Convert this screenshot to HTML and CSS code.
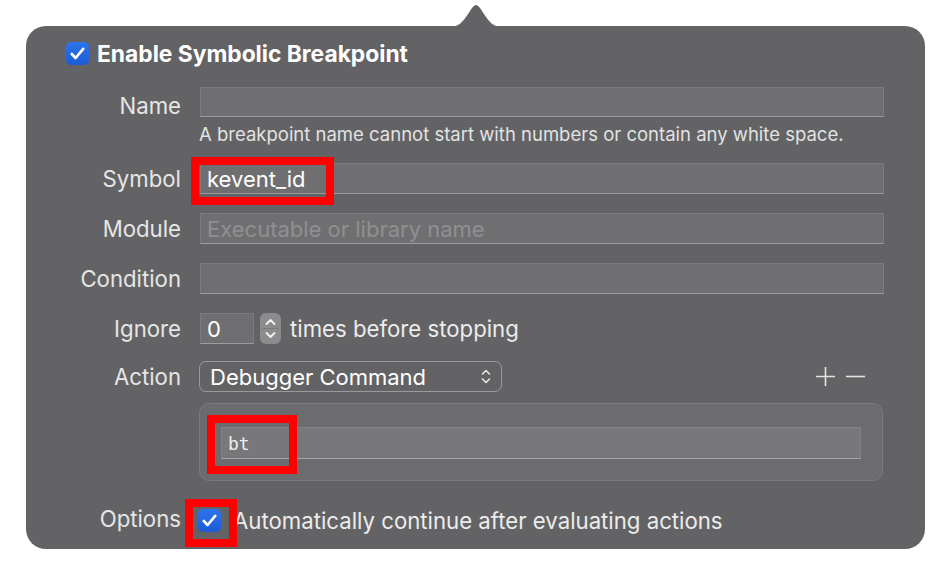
FILE: index.html
```html
<!DOCTYPE html>
<html>
<head>
<meta charset="utf-8">
<link rel="stylesheet" href="styles.css">
</head>
<body>
<div class="panel">
  <svg class="arrow" width="58" height="25" viewBox="0 0 58 25"><path d="M0 25 C 10 25 13 23 19 15 L 25 6 Q 29 0 33 6 L 39 15 C 45 23 48 25 58 25 Z" fill="#636365"/></svg>

  <div class="header">
    <span class="check"><svg width="15" height="13" viewBox="0 0 15 13"><path d="M1.8 7 L5.6 11 L13.2 1.8" fill="none" stroke="#fff" stroke-width="2.6" stroke-linecap="round" stroke-linejoin="round"/></svg></span>
    <span class="title">Enable Symbolic Breakpoint</span>
  </div>

  <div class="row r-name">
    <span class="label">Name</span>
    <div class="field grow"></div>
  </div>
  <div class="row r-hint">
    <span class="label"></span>
    <span class="hint">A breakpoint name cannot start with numbers or contain any white space.</span>
  </div>
  <div class="row r-symbol">
    <span class="label">Symbol</span>
    <div class="field grow"><span class="value">kevent_id</span></div>
  </div>
  <div class="row r-std">
    <span class="label">Module</span>
    <div class="field grow"><span class="placeholder">Executable or library name</span></div>
  </div>
  <div class="row r-std">
    <span class="label">Condition</span>
    <div class="field grow"></div>
  </div>
  <div class="row r-std">
    <span class="label">Ignore</span>
    <div class="field small"><span class="value">0</span></div>
    <span class="stepper"><svg width="21" height="31" viewBox="0 0 21 31"><rect x="0" y="0" width="21" height="31" rx="6" fill="#8c8c8e"/><path d="M6.5 11 L10.5 7 L14.5 11" fill="none" stroke="#f2f2f2" stroke-width="1.8" stroke-linecap="round" stroke-linejoin="round"/><path d="M6.5 20 L10.5 24 L14.5 20" fill="none" stroke="#f2f2f2" stroke-width="1.8" stroke-linecap="round" stroke-linejoin="round"/><line x1="2" y1="15.5" x2="19" y2="15.5" stroke="#7a7a7c" stroke-width="1"/></svg></span>
    <span class="after">times before stopping</span>
  </div>
  <div class="row r-action">
    <span class="label">Action</span>
    <div class="popup"><span>Debugger Command</span><svg width="10" height="15" viewBox="0 0 10 15"><path d="M1.5 5 L5 1.5 L8.5 5 M1.5 10 L5 13.5 L8.5 10" fill="none" stroke="#e6e6e6" stroke-width="1.6" stroke-linecap="round" stroke-linejoin="round"/></svg></div>
    <div class="pm">
      <svg width="19" height="19" viewBox="0 0 19 19"><path d="M0 9.5 H19 M9.5 0 V19" stroke="#e4e4e4" stroke-width="1.6"/></svg>
      <svg width="19" height="19" viewBox="0 0 19 19"><path d="M0 9.5 H19" stroke="#e4e4e4" stroke-width="1.6"/></svg>
    </div>
  </div>
  <div class="row r-box">
    <span class="label"></span>
    <div class="actionbox">
      <div class="field code"><span>bt</span></div>
    </div>
  </div>
  <div class="row r-options">
    <span class="label opt">Options</span>
    <span class="check small-check"><svg width="15" height="13" viewBox="0 0 15 13"><path d="M1.8 7 L5.6 11 L13.2 1.8" fill="none" stroke="#fff" stroke-width="2.6" stroke-linecap="round" stroke-linejoin="round"/></svg></span>
    <span class="after opt-text">Automatically continue after evaluating actions</span>
  </div>

  <div class="mark m1"></div>
  <div class="mark m2"></div>
  <div class="mark m3"></div>
</div>
</body>
</html>
```

FILE: styles.css
```css
* { box-sizing: border-box; }
html, body { margin: 0; padding: 0; background: #ffffff; }
body {
  font-family: Inter, "Noto Sans", "Liberation Sans", sans-serif;
  color: #ececec;
  width: 952px;
  height: 576px;
  overflow: hidden;
}
.panel {
  position: relative;
  margin: 26px 0 0 26px;
  width: 899px;
  height: 523px;
  background: #636365;
  border-radius: 20px;
  padding: 16px 41px 0 0;
}
.arrow {
  position: absolute;
  left: 421px;
  top: -24px;
  display: block;
}
.header {
  display: flex;
  align-items: center;
  padding-left: 40px;
  height: 23px;
}
.check {
  width: 23px;
  height: 23px;
  border-radius: 5px;
  background: linear-gradient(#2f74ec, #1b5bd6);
  display: flex;
  align-items: center;
  justify-content: center;
  flex: none;
}
.title {
  margin-left: 8px;
  font-size: 22.8px;
  font-weight: 700;
  color: #ffffff;
}
.row {
  display: flex;
  align-items: center;
  height: 31px;
}
.label {
  width: 155px;
  margin-right: 19px;
  text-align: right;
  font-size: 22.2px;
  flex: none;
  color: #e6e6e6;
}
.r-name { margin-top: 22px; height: 30px; }
.r-name .label { position: relative; top: 3px; }
.r-hint { margin-top: 6px; height: 22px; }
.r-symbol { margin-top: 18px; }
.r-std { margin-top: 19px; }
.r-action { margin-top: 17px; }
.r-box { margin-top: 11px; height: 78px; }
.r-options { margin-top: 28px; height: 23px; }
.hint {
  font-size: 18.5px;
  color: #e2e2e2;
  margin-left: -1px;
}
.field {
  height: 100%;
  background: #6f6f71;
  border: 1px solid #7c7c7e;
  border-bottom-color: #9c9c9e;
  display: flex;
  align-items: center;
  padding-left: 6px;
  font-size: 22px;
}
.grow { flex: 1; }
.small { width: 54px; flex: none; }
.value { color: #ffffff; }
.placeholder { color: #8f8f91; }
.stepper { margin-left: 6px; display: flex; }
.after {
  margin-left: 9px;
  font-size: 22.2px;
  color: #ececec;
}
.popup {
  width: 303px;
  height: 31px;
  margin-left: -1px;
  border: 1.5px solid #9a9a9c;
  border-radius: 7px;
  display: flex;
  align-items: center;
  justify-content: space-between;
  padding: 0 10px 0 10px;
  font-size: 22px;
  color: #ffffff;
}
.pm {
  margin-left: auto;
  margin-right: 19px;
  display: flex;
  gap: 11px;
}
.pm svg { display: block; }
.actionbox {
  flex: 1;
  height: 78px;
  margin-left: -1px;
  margin-right: 1px;
  background: #6c6c6e;
  border: 1px solid #7a7a7c;
  border-radius: 10px;
  padding: 23px 21px 0 21px;
}
.code {
  height: 32px;
  font-family: "DejaVu Sans Mono", "Liberation Mono", monospace;
  font-size: 18px;
  color: #eeeeee;
  background: #78787a;
  border-color: #838385;
  border-bottom-color: #a4a4a6;
}
.opt { position: relative; top: -2px; }
.small-check { margin-left: -2px; }
.opt-text { margin-left: 12px; }
.mark {
  position: absolute;
  border: 8px solid #ff0000;
}
.m1 { left: 165px; top: 131px; width: 143px; height: 48px; }
.m2 { left: 181px; top: 389px; width: 90px; height: 59px; }
.m3 { left: 159px; top: 473px; width: 52px; height: 48px; }
```
